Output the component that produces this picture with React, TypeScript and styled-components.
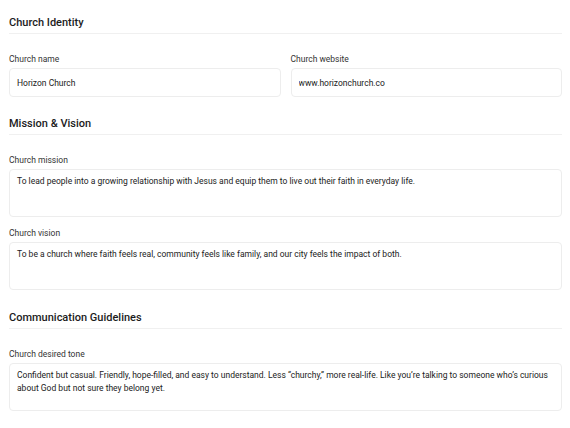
import React from "react";
import styled, { createGlobalStyle } from "styled-components";

const GlobalStyle = createGlobalStyle`
  html, body {
    margin: 0;
    padding: 0;
    background: #ffffff;
  }
  body {
    font-family: Roboto, "Noto Sans", Arial, sans-serif;
    -webkit-font-smoothing: antialiased;
  }
`;

const Page = styled.div`
  display: flex;
  flex-direction: column;
  padding: 15px 8px 16px 9px;
  gap: 19px;
`;

const Section = styled.section<{ $spaced?: boolean }>`
  display: flex;
  flex-direction: column;
  margin-top: ${(p) => (p.$spaced ? "1px" : "0")};
`;

const SectionTitle = styled.h2`
  margin: 0 0 19px;
  padding: 0 0 2px;
  font-size: 11px;
  line-height: 16px;
  font-weight: 500;
  color: #1c1c1c;
  border-bottom: 1px solid #f0f0f0;
`;

const Row = styled.div<{ $cols?: number }>`
  display: grid;
  grid-template-columns: repeat(${(p) => p.$cols ?? 1}, 1fr);
  column-gap: 10px;
  row-gap: 10px;
`;

const Field = styled.label`
  display: flex;
  flex-direction: column;
  gap: 3px;
  min-width: 0;
`;

const Label = styled.span`
  font-size: 8.5px;
  line-height: 12px;
  color: #333333;
`;

const TextInput = styled.input`
  box-sizing: border-box;
  height: 29px;
  width: 100%;
  margin: 0;
  padding: 0 7px;
  border: 1px solid #ededed;
  border-radius: 4px;
  background: #ffffff;
  font-family: inherit;
  font-size: 8.5px;
  color: #222222;
  outline: none;
`;

const TextArea = styled.textarea`
  box-sizing: border-box;
  height: 48px;
  width: 100%;
  margin: 0;
  padding: 5px 7px;
  border: 1px solid #ededed;
  border-radius: 4px;
  background: #ffffff;
  font-family: inherit;
  font-size: 8.5px;
  line-height: 13px;
  color: #222222;
  resize: none;
  outline: none;
  overflow: hidden;
  display: block;
`;

export default function App() {
  return (
    <>
      <GlobalStyle />
      <Page>
        <Section>
          <SectionTitle>Church Identity</SectionTitle>
          <Row $cols={2}>
            <Field>
              <Label>Church name</Label>
              <TextInput readOnly defaultValue="Horizon Church" />
            </Field>
            <Field>
              <Label>Church website</Label>
              <TextInput readOnly defaultValue="www.horizonchurch.co" />
            </Field>
          </Row>
        </Section>
        <Section>
          <SectionTitle>Mission &amp; Vision</SectionTitle>
          <Row>
            <Field>
              <Label>Church mission</Label>
              <TextArea
                readOnly
                defaultValue="To lead people into a growing relationship with Jesus and equip them to live out their faith in everyday life."
              />
            </Field>
            <Field>
              <Label>Church vision</Label>
              <TextArea
                readOnly
                defaultValue="To be a church where faith feels real, community feels like family, and our city feels the impact of both."
              />
            </Field>
          </Row>
        </Section>
        <Section $spaced>
          <SectionTitle>Communication Guidelines</SectionTitle>
          <Row>
            <Field>
              <Label>Church desired tone</Label>
              <TextArea
                readOnly
                defaultValue={"Confident but casual. Friendly, hope-filled, and easy to understand. Less \u201cchurchy,\u201d more real-life. Like you\u2019re talking to someone who\u2019s curious about God but not sure they belong yet."}
              />
            </Field>
          </Row>
        </Section>
      </Page>
    </>
  );
}
